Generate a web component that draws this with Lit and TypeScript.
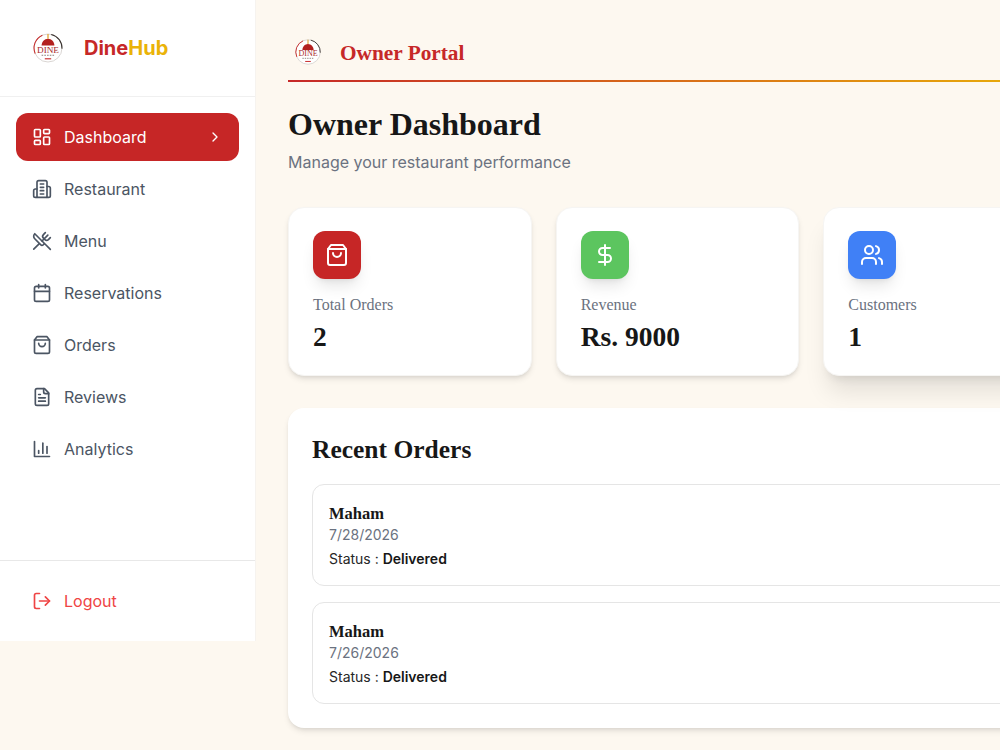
import { css, html, LitElement, svg } from 'lit';
import { customElement } from 'lit/decorators.js';

const icons: Record<string, unknown> = {
  dashboard: svg`<rect x="3" y="3" width="7" height="9" rx="1"/><rect x="14" y="3" width="7" height="5" rx="1"/><rect x="14" y="12" width="7" height="9" rx="1"/><rect x="3" y="16" width="7" height="5" rx="1"/>`,
  building: svg`<path d="M6 22V4a2 2 0 0 1 2-2h8a2 2 0 0 1 2 2v18Z"/><path d="M6 12H4a2 2 0 0 0-2 2v6a2 2 0 0 0 2 2h2"/><path d="M18 9h2a2 2 0 0 1 2 2v9a2 2 0 0 1-2 2h-2"/><path d="M10 6h4"/><path d="M10 10h4"/><path d="M10 14h4"/><path d="M10 18h4"/>`,
  utensils: svg`<path d="m16 2-2.3 2.3a3 3 0 0 0 0 4.2l1.8 1.8a3 3 0 0 0 4.2 0L22 8"/><path d="M15 15 3.3 3.3a4.2 4.2 0 0 0 0 6l7.3 7.3c.7.7 2 .7 2.8 0L15 15Zm0 0 7 7"/><path d="m2.1 21.8 6.4-6.3"/><path d="m19 5-7 7"/>`,
  calendar: svg`<path d="M8 2v4"/><path d="M16 2v4"/><rect x="3" y="4" width="18" height="18" rx="2"/><path d="M3 10h18"/>`,
  bag: svg`<path d="M6 2 3 6v14a2 2 0 0 0 2 2h14a2 2 0 0 0 2-2V6l-3-4Z"/><path d="M3 6h18"/><path d="M16 10a4 4 0 0 1-8 0"/>`,
  file: svg`<path d="M15 2H6a2 2 0 0 0-2 2v16a2 2 0 0 0 2 2h12a2 2 0 0 0 2-2V7Z"/><path d="M14 2v4a2 2 0 0 0 2 2h4"/><path d="M10 9H8"/><path d="M16 13H8"/><path d="M16 17H8"/>`,
  chart: svg`<path d="M3 3v18h18"/><path d="M18 17V9"/><path d="M13 17V5"/><path d="M8 17v-3"/>`,
  logout: svg`<path d="M9 21H5a2 2 0 0 1-2-2V5a2 2 0 0 1 2-2h4"/><path d="m16 17 5-5-5-5"/><path d="M21 12H9"/>`,
  chevron: svg`<path d="m9 18 6-6-6-6"/>`,
  dollar: svg`<line x1="12" y1="2" x2="12" y2="22"/><path d="M17 5H9.5a3.5 3.5 0 0 0 0 7h5a3.5 3.5 0 0 1 0 7H6"/>`,
  users: svg`<path d="M16 21v-2a4 4 0 0 0-4-4H6a4 4 0 0 0-4 4v2"/><circle cx="9" cy="7" r="4"/><path d="M22 21v-2a4 4 0 0 0-3-3.87"/><path d="M16 3.13a4 4 0 0 1 0 7.75"/>`,
};

const icon = (name: string, size = 20) => html`<svg
  width=${size}
  height=${size}
  viewBox="0 0 24 24"
  fill="none"
  stroke="currentColor"
  stroke-width="2"
  stroke-linecap="round"
  stroke-linejoin="round"
>${icons[name]}</svg>`;

const logo = (size: number) => html`<svg width=${size} height=${size} viewBox="0 0 40 40">
  <circle cx="20" cy="20" r="17.5" fill="#fff" stroke="#cfcac6" stroke-width="1"/>
  <path d="M4 27A17.5 17.5 0 0 1 13 4" fill="none" stroke="#c62828" stroke-width="1.3"/>
  <path d="M24 3A17.5 17.5 0 0 1 37.5 21" fill="none" stroke="#3a3330" stroke-width="1.3"/>
  <path d="M12 17c0-4.500 3.500-8.500 8-8.500s8 4 8 8.500Z" fill="#b3201f"/>
  <path d="M20 2.500v6" stroke="#e0a030" stroke-width="1.6"/>
  <text x="20" y="26" text-anchor="middle" font-family="Liberation Serif" font-size="11.500" fill="#a82a2a">DINE</text>
  <path d="M12 29h16" stroke="#8a7f7a" stroke-width="1.3" stroke-dasharray="2 1.400"/>
  <path d="M16 33.500h8" stroke="#c62828" stroke-width="1.400"/>
</svg>`;

const navItems = [
  ['dashboard', 'Dashboard'],
  ['building', 'Restaurant'],
  ['utensils', 'Menu'],
  ['calendar', 'Reservations'],
  ['bag', 'Orders'],
  ['file', 'Reviews'],
  ['chart', 'Analytics'],
];

const stats = [
  { icon: 'bag', cls: 'red', label: 'Total Orders', value: '2' },
  { icon: 'dollar', cls: 'green', label: 'Revenue', value: 'Rs. 9000' },
  { icon: 'users', cls: 'blue', label: 'Customers', value: '1', hover: true },
];

const orders = [
  { name: 'Maham', date: '7/28/2026' },
  { name: 'Maham', date: '7/26/2026' },
];

@customElement('app-root')
export default class AppRoot extends LitElement {
  render() {
    return html`<div class="page">
      <aside class="sidebar">
        <div class="brand">
          ${logo(32)}
          <span class="brand-name"><span class="dine">Dine</span><span class="hub">Hub</span></span>
        </div>
        <nav class="nav">
          ${navItems.map(
            ([ic, label], i) => html`<div class="nav-item ${i === 0 ? 'active' : ''}">
              ${icon(ic)}
              <span>${label}</span>
              ${i === 0 ? html`<span class="chev">${icon('chevron', 16)}</span>` : ''}
            </div>`
          )}
        </nav>
        <div class="foot">
          <div class="logout">${icon('logout')}<span>Logout</span></div>
        </div>
      </aside>
      <main class="main">
        <div class="portal">
          ${logo(28)}
          <span class="portal-name">Owner Portal</span>
        </div>
        <div class="rule"></div>
        <h1>Owner Dashboard</h1>
        <p class="sub">Manage your restaurant performance</p>
        <section class="stats">
          ${stats.map(
            (s) => html`<div class="card stat ${s.hover ? 'lifted' : ''}">
              <div class="stat-icon ${s.cls}">${icon(s.icon, 24)}</div>
              <div class="stat-label">${s.label}</div>
              <div class="stat-value">${s.value}</div>
            </div>`
          )}
        </section>
        <section class="card recent">
          <h2>Recent Orders</h2>
          <div class="order-list">
            ${orders.map(
              (o) => html`<div class="order">
                <div class="order-name">${o.name}</div>
                <div class="order-date">${o.date}</div>
                <div class="order-status">Status : <b>Delivered</b></div>
              </div>`
            )}
          </div>
        </section>
      </main>
    </div>`;
  }

  static styles = css`
    :host {
      display: block;
      height: 750px;
      overflow: hidden;
      background: #fdf8f0;
      font-family: Inter, 'Noto Sans', sans-serif;
      color: #171717;
    }

    .page {
      display: flex;
      align-items: flex-start;
      width: 1099px;
    }

    .sidebar {
      width: 255px;
      height: 641px;
      flex: none;
      display: flex;
      flex-direction: column;
      background: #fff;
      border-right: 1px solid #f6f3ef;
    }

    .brand {
      height: 96px;
      display: flex;
      align-items: center;
      gap: 20px;
      padding-left: 32px;
      border-bottom: 1px solid #f0f0f0;
      flex: none;
    }

    .brand-name {
      font-size: 20px;
      font-weight: 700;
      line-height: 28px;
    }

    .dine {
      color: #c62828;
    }

    .hub {
      color: #eab308;
    }

    .nav {
      display: flex;
      flex-direction: column;
      gap: 4px;
      padding: 16px;
    }

    .nav-item {
      height: 48px;
      display: flex;
      align-items: center;
      gap: 12px;
      padding: 0 16px;
      border-radius: 12px;
      font-size: 16px;
      color: #4b5563;
    }

    .nav-item.active {
      background: #c62626;
      color: #fff;
    }

    .chev {
      margin-left: auto;
      display: flex;
    }

    .foot {
      margin-top: auto;
      height: 81px;
      padding: 16px;
      border-top: 1px solid #e8e8e8;
      box-sizing: border-box;
    }

    .logout {
      height: 48px;
      display: flex;
      align-items: center;
      gap: 12px;
      padding: 0 16px;
      font-size: 16px;
      color: #ef4444;
    }

    .main {
      width: 779px;
      flex: none;
      padding: 24px 32px 0;
    }

    .portal {
      height: 56px;
      display: flex;
      align-items: center;
      gap: 18px;
      padding-left: 6px;
    }

    .portal-name {
      padding-top: 2px;
      font-family: 'Liberation Serif', serif;
      font-size: 21.300px;
      font-weight: 700;
      color: #c62828;
    }

    .rule {
      height: 2px;
      background: linear-gradient(90deg, #c62828, #eab308);
    }

    h1 {
      margin: 22px 0 0;
      font-family: 'Liberation Serif', serif;
      font-size: 32px;
      line-height: 40px;
      font-weight: 700;
      color: #171717;
    }

    .sub {
      margin: 6px 0 0;
      font-size: 16px;
      line-height: 24px;
      color: #6b7280;
    }

    .stats {
      display: grid;
      grid-template-columns: repeat(3, 1fr);
      gap: 24px;
      margin-top: 33px;
    }

    .card {
      background: #fff;
      border: 1px solid #f6f5f3;
      border-radius: 16px;
      box-shadow: 0 4px 6px -1px rgba(0, 0, 0, 0.1), 0 2px 4px -2px rgba(0, 0, 0, 0.1);
      box-sizing: border-box;
    }

    .stat {
      height: 169px;
      padding: 23px 24px;
    }

    .lifted {
      box-shadow: 0 20px 25px -5px rgba(0, 0, 0, 0.1), 0 8px 10px -6px rgba(0, 0, 0, 0.1);
    }

    .stat-icon {
      width: 48px;
      height: 48px;
      border-radius: 12px;
      display: flex;
      align-items: center;
      justify-content: center;
      color: #fff;
      box-shadow: 0 10px 15px -3px rgba(0, 0, 0, 0.1), 0 4px 6px -4px rgba(0, 0, 0, 0.1);
    }

    .red {
      background: #c62626;
    }

    .green {
      background: #5cc55f;
    }

    .blue {
      background: #4080f6;
    }

    .stat-label {
      margin-top: 16px;
      font-family: 'Liberation Serif', serif;
      font-size: 16px;
      line-height: 20px;
      color: #6b7280;
    }

    .stat-value {
      margin-top: 6px;
      font-family: 'Liberation Serif', serif;
      font-size: 27.500px;
      line-height: 32px;
      font-weight: 700;
      color: #171717;
    }

    .recent {
      margin-top: 32px;
      height: 320px;
      padding: 24px;
      border: none;
    }

    h2 {
      margin: 0;
      font-family: 'Liberation Serif', serif;
      font-size: 25.500px;
      line-height: 36px;
      font-weight: 700;
      color: #171717;
    }

    .order-list {
      display: flex;
      flex-direction: column;
      gap: 16px;
      margin-top: 16px;
    }

    .order {
      height: 102px;
      box-sizing: border-box;
      padding: 17px 16px 16px;
      border: 1px solid #e5e5e5;
      border-radius: 12px;
    }

    .order-name {
      font-family: 'Liberation Serif', serif;
      font-size: 16.500px;
      line-height: 23px;
      font-weight: 700;
      color: #171717;
    }

    .order-date {
      font-size: 14px;
      line-height: 20px;
      color: #6b7280;
    }

    .order-status {
      margin-top: 4px;
      font-size: 14px;
      line-height: 20px;
      color: #262626;
    }

    .order-status b {
      font-weight: 600;
      color: #171717;
    }
  `;
}
